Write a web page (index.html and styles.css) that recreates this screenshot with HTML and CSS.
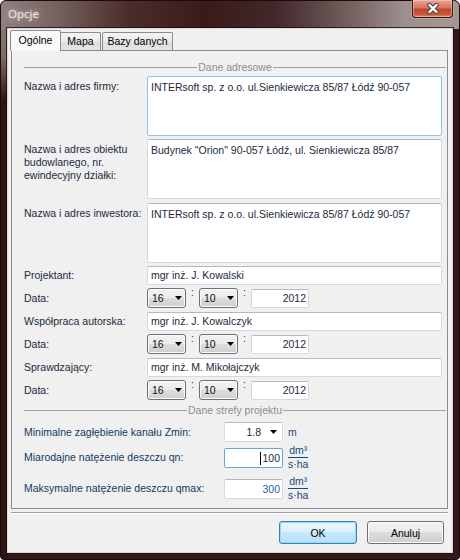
FILE: index.html
```html
<!DOCTYPE html>
<html lang="pl">
<head>
<meta charset="utf-8">
<title>Opcje</title>
<link rel="stylesheet" href="styles.css">
</head>
<body>
<div class="window">
  <div class="titlebar">
    <span class="title">Opcje</span>
    <div class="close">
      <svg width="14" height="11" viewBox="0 0 14 11"><path d="M3.5 2 L10.5 9 M10.5 2 L3.5 9" stroke="#4a4444" stroke-width="4.4" stroke-linecap="round"/><path d="M3.5 2 L10.5 9 M10.5 2 L3.5 9" stroke="#ffffff" stroke-width="2.4" stroke-linecap="round"/></svg>
    </div>
  </div>
  <div class="client">
    <div class="tabctl">
      <div class="tabstrip">
        <div class="tab selected">Ogólne</div>
        <div class="tab mapa">Mapa</div>
        <div class="tab bazy">Bazy danych</div>
      </div>
      <div class="panel">
        <div class="group-head"><span>Dane adresowe</span></div>
        <div class="row ta-row first">
          <div class="label">Nazwa i adres firmy:</div>
          <div class="textbox multi focus">INTERsoft sp. z o.o. ul.Sienkiewicza 85/87 Łódź 90-057</div>
        </div>
        <div class="row ta-row">
          <div class="label">Nazwa i adres obiektu<br>budowlanego, nr.<br>ewindecyjny działki:</div>
          <div class="textbox multi">Budynek "Orion" 90-057 Łódź, ul. Sienkiewicza 85/87</div>
        </div>
        <div class="row ta-row sp4">
          <div class="label">Nazwa i adres inwestora:</div>
          <div class="textbox multi">INTERsoft sp. z o.o. ul.Sienkiewicza 85/87 Łódź 90-057</div>
        </div>
        <div class="row in-row">
          <div class="label">Projektant:</div>
          <div class="textbox single">mgr inż. J. Kowalski</div>
        </div>
        <div class="row date-row">
          <div class="label">Data:</div>
          <div class="combo"><span>16</span><svg class="arrow" width="7" height="4" viewBox="0 0 7 4"><path d="M0 0H7L3.5 4Z" fill="#000"/></svg></div>
          <span class="colon">:</span>
          <div class="combo"><span>10</span><svg class="arrow" width="7" height="4" viewBox="0 0 7 4"><path d="M0 0H7L3.5 4Z" fill="#000"/></svg></div>
          <span class="colon">:</span>
          <div class="textbox year">2012</div>
        </div>
        <div class="row in-row sp4">
          <div class="label">Współpraca autorska:</div>
          <div class="textbox single">mgr inż. J. Kowalczyk</div>
        </div>
        <div class="row date-row">
          <div class="label">Data:</div>
          <div class="combo"><span>16</span><svg class="arrow" width="7" height="4" viewBox="0 0 7 4"><path d="M0 0H7L3.5 4Z" fill="#000"/></svg></div>
          <span class="colon">:</span>
          <div class="combo"><span>10</span><svg class="arrow" width="7" height="4" viewBox="0 0 7 4"><path d="M0 0H7L3.5 4Z" fill="#000"/></svg></div>
          <span class="colon">:</span>
          <div class="textbox year">2012</div>
        </div>
        <div class="row in-row sp4">
          <div class="label">Sprawdzający:</div>
          <div class="textbox single">mgr inż. M. Mikołajczyk</div>
        </div>
        <div class="row date-row">
          <div class="label">Data:</div>
          <div class="combo"><span>16</span><svg class="arrow" width="7" height="4" viewBox="0 0 7 4"><path d="M0 0H7L3.5 4Z" fill="#000"/></svg></div>
          <span class="colon">:</span>
          <div class="combo"><span>10</span><svg class="arrow" width="7" height="4" viewBox="0 0 7 4"><path d="M0 0H7L3.5 4Z" fill="#000"/></svg></div>
          <span class="colon">:</span>
          <div class="textbox year">2012</div>
        </div>
        <div class="group-head sp4"><span>Dane strefy projektu</span></div>
        <div class="row param-row sp5">
          <div class="label blue">Minimalne zagłębienie kanału Zmin:</div>
          <div class="flatcombo"><span>1.8</span><svg class="arrow" width="7" height="4" viewBox="0 0 7 4"><path d="M0 0H7L3.5 4Z" fill="#000"/></svg></div>
          <span class="unit">m</span>
        </div>
        <div class="row param-row">
          <div class="label blue">Miarodajne natężenie deszczu qn:</div>
          <div class="textbox num active"><span class="caret"></span>100</div>
          <span class="unit frac"><span class="num-part">dm³</span><span class="den-part">s·ha</span></span>
        </div>
        <div class="row param-row sp6">
          <div class="label blue">Maksymalne natężenie deszczu qmax:</div>
          <div class="textbox num readonly">300</div>
          <span class="unit frac"><span class="num-part">dm³</span><span class="den-part">s·ha</span></span>
        </div>
      </div>
    </div>
    <div class="separator"></div>
    <div class="buttons">
      <div class="btn default">OK</div>
      <div class="btn">Anuluj</div>
    </div>
  </div>
</div>
</body>
</html>
```
FILE: styles.css
```css
* { box-sizing: border-box; }
html, body { margin: 0; padding: 0; }
body {
  width: 460px;
  height: 560px;
  overflow: hidden;
  font-family: "Liberation Sans", Arial, sans-serif;
  font-size: 10.5px;
  color: #1b2a3c;
  background: #ffffff;
}

.window {
  width: 460px;
  height: 560px;
  border: 1px solid #1a0c0b;
  border-radius: 6px 6px 4px 4px;
  padding: 0 6px 6px 6px;
  display: flex;
  flex-direction: column;
  background:
    linear-gradient(to right, #8f817f 0%, #76625f 12%, #4a2c2a 28%, #3a1b1a 45%, #42282a 60%, #6f5c5b 75%, #9d8f8d 88%, #a49694 100%) left top / 100% 28px no-repeat,
    linear-gradient(to bottom, #8c7d7b 0, #7d6c6a 55px, #2c1515 100px) left top / 7px 100% no-repeat,
    #321a19;
}

.titlebar {
  height: 27px;
  display: flex;
  align-items: flex-start;
  justify-content: space-between;
}
.title {
  margin: 5px 0 0 1px;
  font-family: "Noto Sans", "Open Sans", sans-serif;
  font-size: 11.5px;
  line-height: 16px;
  color: #e6dede;
  text-shadow: 0 0 6px rgba(255, 255, 255, 0.55), 0 0 2px rgba(255, 255, 255, 0.4);
}
.close {
  margin-top: -1px;
  width: 41px;
  height: 18px;
  border: 1px solid #3a1410;
  border-top: none;
  border-radius: 0 0 4px 4px;
  background: linear-gradient(to bottom, #e9a596 0%, #d77560 45%, #c2432a 55%, #c85a3c 85%, #d98a6a 100%);
  box-shadow: inset 0 0 0 1px rgba(255, 220, 210, 0.45), 0 0 0 1px rgba(230, 200, 195, 0.35);
  display: flex;
  align-items: center;
  justify-content: center;
}

.client {
  flex: 1;
  border: 1px solid #ddd6d6;
  box-shadow: 0 0 0 1px rgba(30, 12, 12, 0.8);
  background: #f0f0f0;
  padding: 1px 4px 0 3px;
  display: flex;
  flex-direction: column;
}

.tabctl { width: 437px; }
.tabstrip {
  display: flex;
  align-items: flex-end;
  height: 20px;
  margin-left: -1px;
  position: relative;
  z-index: 2;
}
.tab {
  height: 18px;
  border: 1px solid #898c95;
  border-bottom: none;
  border-radius: 2px 2px 0 0;
  background: linear-gradient(to bottom, #f3f3f3 0%, #ebebeb 50%, #dedede 50%, #e3e3e3 100%);
  color: #000;
  text-align: center;
  line-height: 17px;
  font-size: 10.5px;
}
.tab.selected {
  width: 51px;
  height: 21px;
  margin-bottom: -1px;
  background: #f9f9f9;
  line-height: 19px;
  position: relative;
  z-index: 3;
}
.tab.mapa { width: 41px; margin-left: -1px; }
.tab.bazy { width: 71px; margin-left: 1px; }

.panel {
  height: 459px;
  border: 1px solid #898c95;
  background: #f0f0f0;
  padding: 10px 1px 0 12px;
  display: flex;
  flex-direction: column;
  gap: 3px;
  position: relative;
  z-index: 1;
}

.group-head {
  display: flex;
  align-items: center;
  height: 13px;
  line-height: 13px;
  color: #8d8d8d;
}
.group-head::before,
.group-head::after {
  content: "";
  flex: 1;
  height: 1px;
  background: #a0a0a0;
}
.group-head span { padding: 0 1px; }

.row { display: flex; }
.ta-row { align-items: flex-start; }
.in-row, .date-row, .param-row { align-items: center; }
.first { margin-top: -1px; }
.sp4 { margin-top: 1px; }
.sp5 { margin-top: 2px; }
.sp6 { margin-top: 3px; }

.label {
  width: 123px;
  flex: none;
  line-height: 13px;
  color: #1b2a3c;
}
.ta-row .label { padding-top: 4px; }
.label.blue { width: 200px; color: #123a60; }

.textbox {
  background: #ffffff;
  border: 1px solid #d5d8de;
  border-top-color: #b5b8c0;
  border-radius: 2px;
  color: #1b2a3c;
  line-height: 13px;
}
.textbox.multi {
  width: 295px;
  height: 60px;
  padding: 4px 3px;
}
.textbox.focus { border-color: #93bfe6; }
.textbox.single {
  width: 295px;
  height: 19px;
  padding: 2px 3px;
}
.textbox.year {
  width: 58px;
  height: 19px;
  padding: 2px 2px;
  text-align: right;
}

.combo {
  width: 39px;
  height: 20px;
  border: 1px solid #707070;
  border-radius: 3px;
  background: linear-gradient(to bottom, #f2f2f2 0%, #ebebeb 50%, #dddddd 50%, #cfcfcf 100%);
  box-shadow: inset 0 0 0 1px #fbfbfb;
  display: flex;
  align-items: center;
  justify-content: space-between;
  padding: 0 3px 0 4px;
  color: #111;
}
.arrow { display: block; flex: none; }

.colon {
  width: 13px;
  text-align: center;
  align-self: flex-start;
  line-height: 10px;
  margin-top: -1px;
  color: #444;
}

.flatcombo {
  width: 59px;
  height: 20px;
  background: #ffffff;
  border: 1px solid #d5d8de;
  border-top-color: #b5b8c0;
  border-radius: 2px;
  display: flex;
  align-items: center;
  justify-content: flex-end;
  gap: 9px;
  padding-right: 5px;
  color: #1b2a3c;
}

.textbox.num {
  width: 59px;
  height: 20px;
  padding: 3px 2px;
  text-align: right;
}
.textbox.active { border-color: #6aa6dc; }
.textbox.readonly { color: #1f64a8; }
.caret {
  display: inline-block;
  width: 1px;
  height: 13px;
  background: #000;
  vertical-align: top;
  margin-right: 1px;
}

.unit {
  margin-left: 5px;
  color: #174a7c;
  line-height: 12px;
}
.frac {
  display: flex;
  flex-direction: column;
  align-items: center;
  line-height: 11px;
}
.frac .num-part {
  border-bottom: 1px solid #174a7c;
  padding: 0 0 1px;
  width: 100%;
  text-align: center;
}
.frac .den-part { padding: 1px 0 0; }

.separator {
  width: 437px;
  height: 1px;
  margin-top: 3px;
  background: #a0a0a0;
  box-shadow: 0 1px 0 #ffffff;
}

.buttons {
  display: flex;
  justify-content: flex-end;
  gap: 10px;
  margin-top: 8px;
  padding-right: 4px;
}
.btn {
  width: 77px;
  height: 23px;
  border: 1px solid #707070;
  border-radius: 3px;
  background: linear-gradient(to bottom, #f2f2f2 0%, #ebebeb 50%, #dddddd 50%, #cfcfcf 100%);
  box-shadow: inset 0 0 0 1px #fcfcfc;
  display: flex;
  align-items: center;
  justify-content: center;
  color: #000;
  font-size: 10.5px;
}
.btn.default {
  width: 78px;
  border-color: #3c7fb1;
  background: linear-gradient(to bottom, #eaf6fd 0%, #d9f0fc 50%, #c6e8fb 50%, #b7e0f7 100%);
  box-shadow: inset 0 0 0 1px #8fdcf9;
}
```
